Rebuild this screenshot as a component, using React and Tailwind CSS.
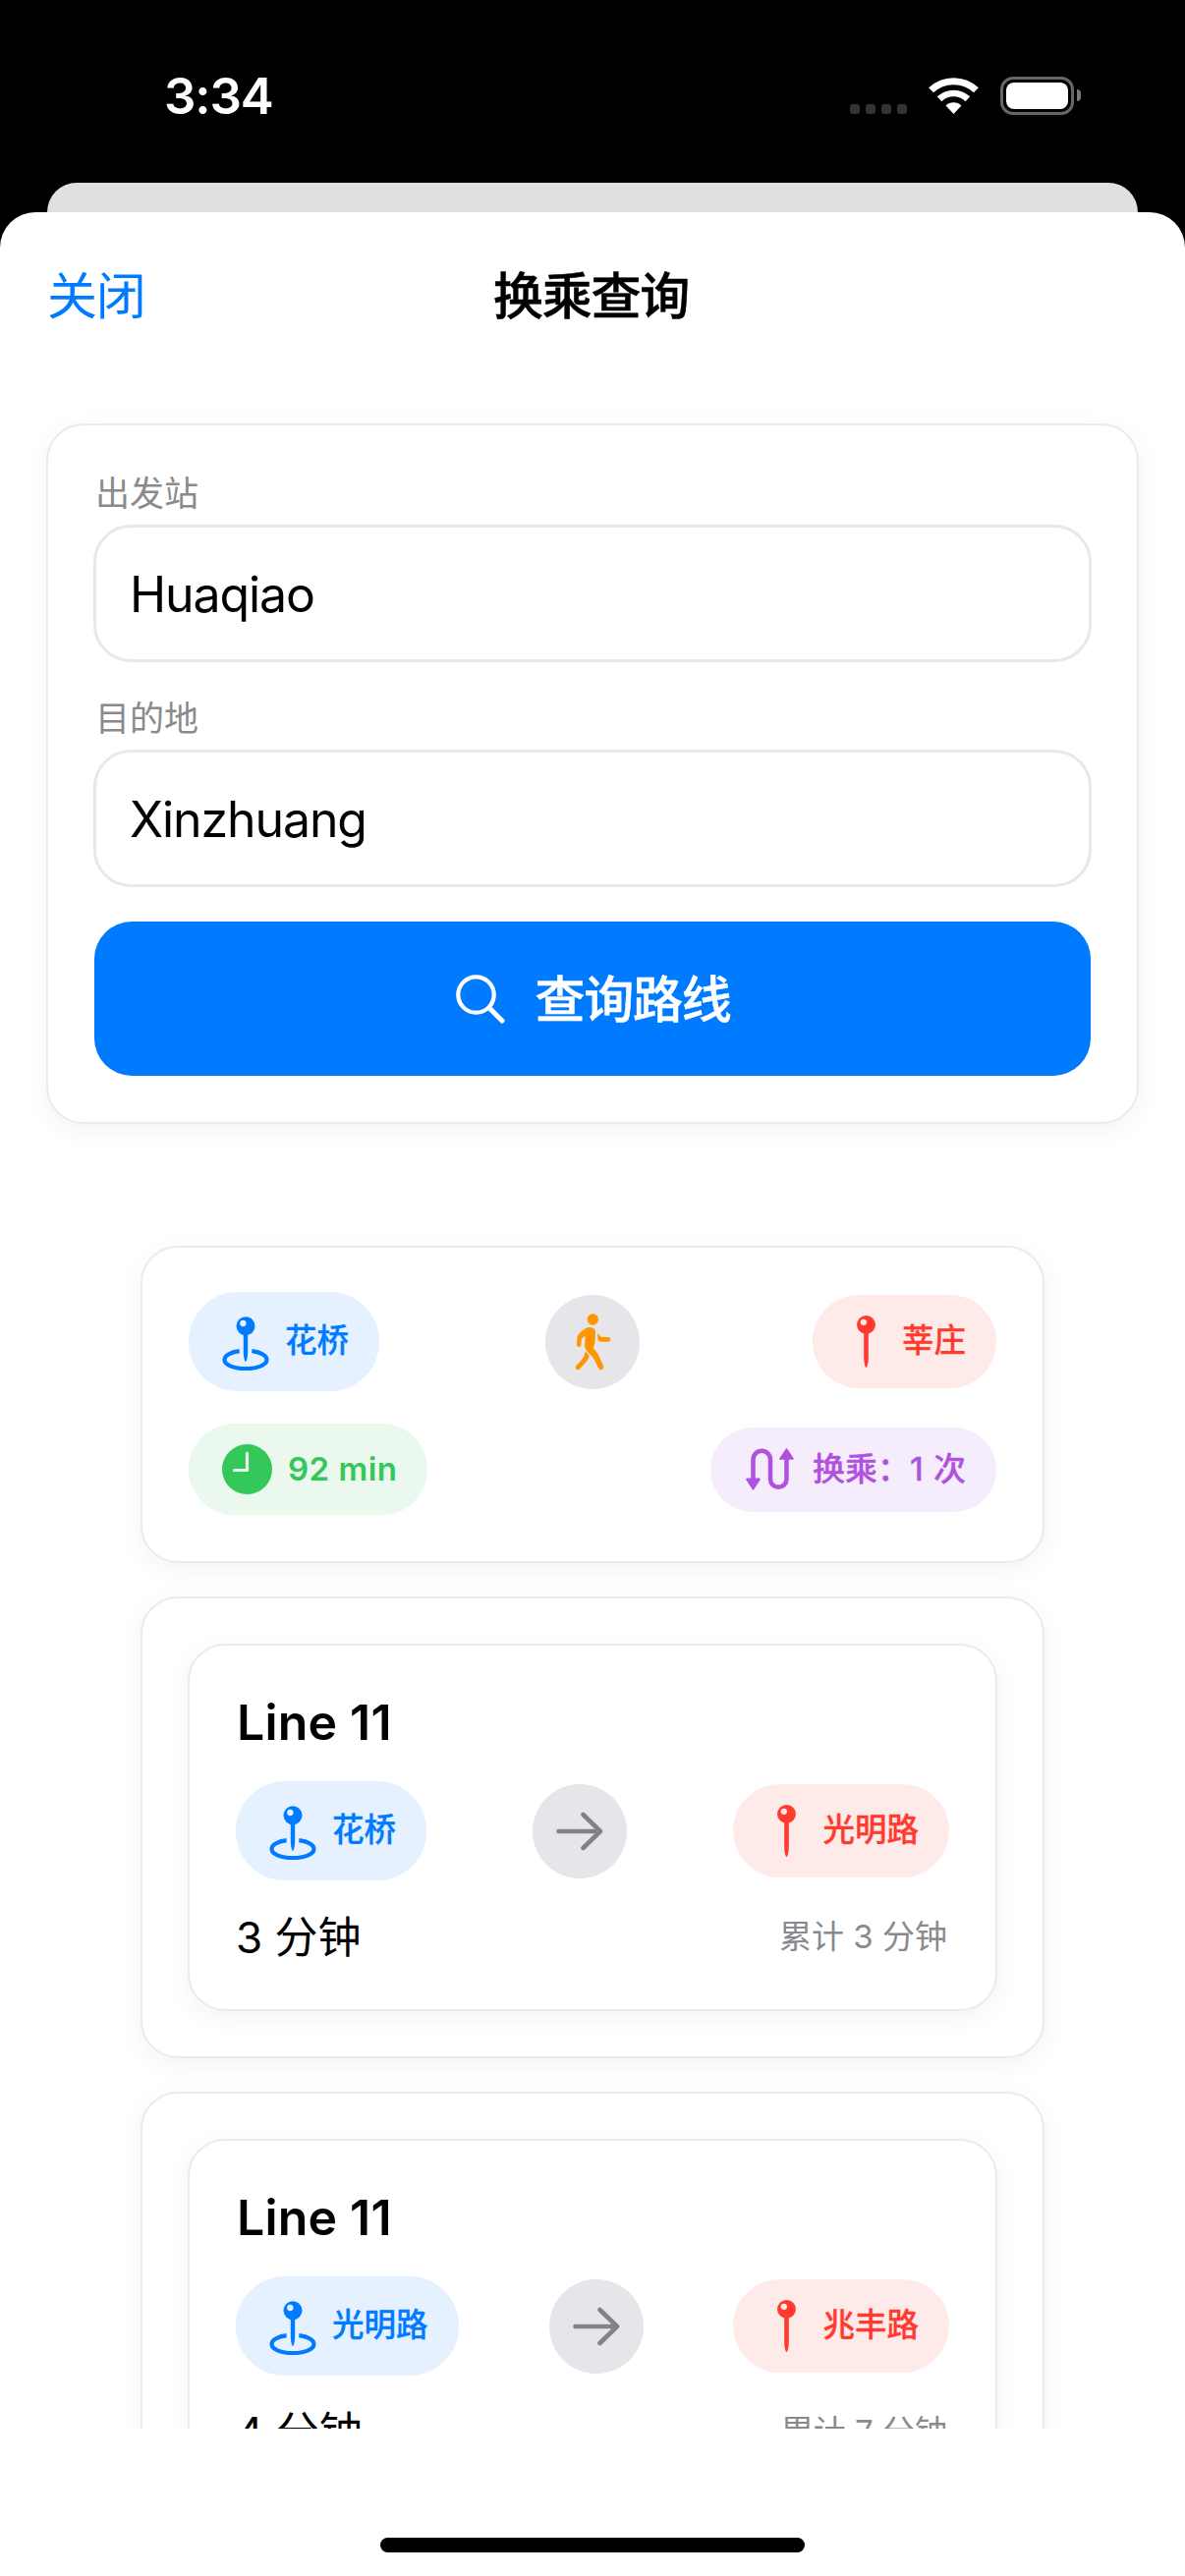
import React from "react";

const card =
  "rounded-[38px] border-2 border-[#ebebeb] bg-white shadow-[0_6px_26px_rgba(0,0,0,0.05)]";

function StatusBar() {
  return (
    <div className="flex h-[186px] items-start justify-between pl-[167px] pr-[106px]">
      <div className="mt-[67px] text-[51px] font-semibold leading-[62px] tracking-[-1.100px] text-white">3:34</div>
      <div className="mt-[78px] flex h-[39px] items-start">
        <div className="mt-[28px] flex gap-[6px]">
          {[0, 1, 2, 3].map((i) => (
            <span key={i} className="size-[10px] rounded-[3px] bg-[#333333]" />
          ))}
        </div>
        <svg className="ml-[22px] mt-px h-[37px] w-[51px]" viewBox="315 57 153 111" fill="none">
          <path d="M322.7 95.5A100 100 0 0 1 460.3 95.5" stroke="#fff" strokeWidth="21" />
          <path d="M348.2 122.3A63 63 0 0 1 434.8 122.3" stroke="#fff" strokeWidth="20" />
          <path d="M391.5 168L367.5 142.6A35 35 0 0 1 415.5 142.6Z" fill="#fff" />
        </svg>
        <div className="ml-[22px] h-[39px] w-[75px] rounded-[13px] border-3 border-[#666666] p-[3px]">
          <div className="h-full w-full rounded-[8px] bg-white" />
        </div>
        <div className="ml-[3px] mt-[13px] h-[12px] w-[4px] rounded-r-full bg-[#777777]" />
      </div>
    </div>
  );
}

function PinRing() {
  return (
    <svg className="h-[55px] w-[48px]" viewBox="137 120 144 165" fill="none">
      <path
        d="M190 225.500C162 229 144.500 240 144.500 252C144.500 268 174 279.500 209 279.500S273.500 268 273.500 252C273.500 240 256 229 228 225.500"
        stroke="#007aff"
        strokeWidth="12.500"
      />
      <path d="M202.500 174H215.500V228C215.500 242 212 258 209 258S202.500 242 202.500 228Z" fill="#007aff" />
      <circle cx="209" cy="149" r="28.500" fill="#007aff" />
      <circle cx="201" cy="141" r="9.500" fill="#e5f1ff" />
    </svg>
  );
}

function Pin() {
  return (
    <svg className="h-[53px] w-[19px]" viewBox="0 0 57 160">
      <path d="M21.500 52H35.500V128C35.500 144 31.500 160 28.500 160S21.500 144 21.500 128Z" fill="#ff3b30" />
      <circle cx="28.500" cy="28.500" r="28.500" fill="#ff3b30" />
      <circle cx="20.500" cy="20.500" r="9.500" fill="#ffeaea" />
    </svg>
  );
}

function ClockIcon() {
  return (
    <svg className="size-[51px]" viewBox="138 511 152 152" fill="none">
      <circle cx="214" cy="587" r="76" fill="#34c759" />
      <path d="M214 539V590H175" stroke="#ebf8ee" strokeWidth="9.500" strokeLinecap="round" strokeLinejoin="round" />
    </svg>
  );
}

function SwapIcon() {
  return (
    <svg className="h-[43px] w-[49px]" viewBox="0 0 49 43" fill="none">
      <path d="M7.500 32V11.500A8.750 8.750 0 0 1 25 11.500V31.500A8.250 8.250 0 0 0 41.500 31.500V10" stroke="#af52de" strokeWidth="4.500" />
      <path d="M1.200 31.600H13.800L7.500 41.500Z" fill="#af52de" stroke="#af52de" strokeWidth="2" strokeLinejoin="round" />
      <path d="M35.200 10.800H47.800L41.500 1.200Z" fill="#af52de" stroke="#af52de" strokeWidth="2" strokeLinejoin="round" />
    </svg>
  );
}

function Walker() {
  return (
    <svg className="size-[96px]" viewBox="45 51 288 288" fill="#ff9500">
      <circle cx="190" cy="126" r="17" />
      <path d="M168 153C178 147 197 150 198 164L197 190C196 200 194 208 191 213C196 220 204 226 208 236L222 268C226 278 214 285 208 276L195 250C191 240 179 232 169 218C165 213 165 205 166 195L167 178C160 180 155 183 155 190L154 205C153 212 142 211 141 204L142 184C143 170 158 160 168 153Z" />
      <path d="M205 168C210 174 213 180 220 180H237A7 7 0 0 1 237 194H217C208 193 204 188 205 180Z" />
      <path d="M167 223L179 237C178 244 176 248 172 253L149 278C142 284 133 275 139 268L158 247C164 240 165 233 167 223Z" />
    </svg>
  );
}

function Arrow() {
  return (
    <svg className="h-[40px] w-[48px]" viewBox="0 0 48 40" fill="none">
      <path d="M2.500 20H45M27.500 3L45 20L27.500 37" stroke="#838287" strokeWidth="4.600" strokeLinecap="round" strokeLinejoin="round" />
    </svg>
  );
}

const pillText = "pb-[2px] leading-[46px] whitespace-nowrap";

function FromPill({ name }) {
  return (
    <div className="flex h-[101px] items-center rounded-[50px] bg-[#e5f1ff] pl-[34px] pr-[31px]">
      <div className="mt-[4px] h-[55px]"><PinRing /></div>
      <span className={`ml-[16px] text-[32.500px] font-medium text-[#007aff] [-webkit-text-stroke:0.3px] ${pillText}`}>{name}</span>
    </div>
  );
}

function ToPill({ name }) {
  return (
    <div className="flex h-[95px] items-center rounded-[48px] bg-[#ffeaea] pl-[45px] pr-[31px]">
      <Pin />
      <span className={`ml-[27px] text-[32.500px] font-medium text-[#ff3b30] [-webkit-text-stroke:0.3px] ${pillText}`}>{name}</span>
    </div>
  );
}

function Round({ children }) {
  return (
    <div className="flex size-[96px] items-center justify-center rounded-full bg-[#e5e5ea]">{children}</div>
  );
}

function Field({ label, value }) {
  return (
    <div>
      <div className="h-[42px] pl-px pt-px text-[35px] leading-[42px] text-[#8a8a8e]">{label}</div>
      <div className="-mx-px mt-[12px] flex h-[140px] items-center rounded-[38px] border-3 border-[#e8e8e8] px-[34px] pt-[2px] text-[50px] leading-[60px] tracking-[-1.100px] text-black">
        {value}
      </div>
    </div>
  );
}

function Segment({ line, from, to, time, total }) {
  return (
    <div className={`-m-px h-[470px] shrink-0 p-[47px] ${card}`}>
      <div className={`-m-px h-[374px] p-[47px] ${card}`}>
        <div className="h-[61px] pl-px pt-px text-[50px] font-semibold leading-[61px] tracking-[0.200px] text-black">{line}</div>
        <div className="mt-[30px] flex h-[101px] items-center justify-between">
          <FromPill name={from} />
          <Round><Arrow /></Round>
          <ToPill name={to} />
        </div>
        <div className="mt-[30px] flex h-[54px] items-center justify-between pr-[2px]">
          <span className="pt-[2px] text-[44px] leading-[54px] text-black">{time}</span>
          <span className="text-[33px] leading-[54px] text-[#8a8a8e]">{total}</span>
        </div>
      </div>
    </div>
  );
}

export default function App() {
  return (
    <div className="flex h-[2622px] w-[1206px] flex-col overflow-hidden bg-black font-['Inter','Noto_Sans_CJK_SC',sans-serif]">
      <StatusBar />
      <div className="mx-[48px] h-[30px] rounded-t-[34px] bg-[#e0e0e0]" />
      <div className="flex flex-1 flex-col rounded-t-[36px] bg-white">
        <div className="grid h-[168px] grid-cols-3 items-center px-[48px] pt-[3px] text-[51px] leading-[60px] tracking-[-1.300px]">
          <span className="text-[#007aff]">关闭</span>
          <span className="-ml-[3px] text-center font-medium text-black [-webkit-text-stroke:0.5px]">换乘查询</span>
          <span />
        </div>

        <div className={`mx-[47px] mt-[47px] flex h-[713px] flex-col gap-[35px] p-[47px] ${card}`}>
          <Field label="出发站" value="Huaqiao" />
          <Field label="目的地" value="Xinzhuang" />
          <div className="flex h-[157px] items-center justify-center rounded-[38px] bg-[#007aff]">
            <svg className="ml-px h-[50px] w-[50px]" viewBox="0 0 50 50" fill="none" stroke="#fff" strokeLinecap="round">
              <circle cx="20.500" cy="20.500" r="18.200" strokeWidth="4.200" />
              <path d="M34 34L47 47" strokeWidth="5" />
            </svg>
            <span className="ml-[31px] pt-[3px] text-[51px] font-medium leading-[60px] tracking-[-1.300px] text-white [-webkit-text-stroke:0.5px]">查询路线</span>
          </div>
        </div>

        <div className="-mt-px flex h-[1329px] flex-col gap-[36px] overflow-hidden px-[144px] pt-[126px]">
          <div className={`-m-px flex h-[323px] shrink-0 flex-col gap-[33px] px-[47px] pt-[45px] ${card}`}>
            <div className="grid h-[101px] grid-cols-[1fr_96px_1fr] items-center">
              <div className="flex justify-start"><FromPill name="花桥" /></div>
              <Round><Walker /></Round>
              <div className="flex justify-end"><ToPill name="莘庄" /></div>
            </div>
            <div className="flex h-[93px] items-center justify-between">
              <div className="flex h-[93px] w-[243px] items-center rounded-[47px] bg-[#ebf8ee] pl-[34px]">
                <ClockIcon />
                <span className={`ml-[16px] text-[33px] font-semibold tracking-[0.500px] text-[#34c759] ${pillText}`}>92 min</span>
              </div>
              <div className="flex h-[86px] w-[291px] items-center rounded-[43px] bg-[#f5edfb] pl-[36px]">
                <SwapIcon />
                <span className={`ml-[19px] text-[33px] font-medium text-[#af52de] [word-spacing:1.500px] [-webkit-text-stroke:0.3px] ${pillText}`}>换乘：1 次</span>
              </div>
            </div>
          </div>
          <Segment line="Line 11" from="花桥" to="光明路" time="3 分钟" total="累计 3 分钟" />
          <Segment line="Line 11" from="光明路" to="兆丰路" time="4 分钟" total="累计 7 分钟" />
        </div>

        <div className="mx-auto mt-[111px] h-[15px] w-[432px] rounded-full bg-black" />
      </div>
    </div>
  );
}
